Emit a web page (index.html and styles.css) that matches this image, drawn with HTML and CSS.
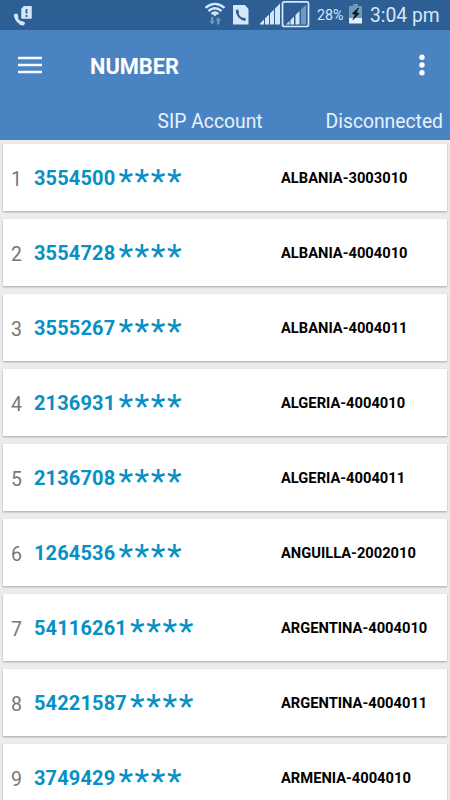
FILE: index.html
```
<!DOCTYPE html>
<html lang="en">
<head>
    <meta charset="UTF-8">
    <meta name="viewport" content="width=device-width, initial-scale=1">
    <title>Number</title>
    <link rel="stylesheet" href="styles.css">
</head>
<body>

    <div class="status-bar">
        <svg class="call-icon" width="20" height="22" viewBox="0 0 20 22">
            <path d="M11.500.5H18v11.500H9V3z" fill="#d5e8fb" stroke="#d5e8fb" stroke-linejoin="round" stroke-width="1.500"/>
            <path d="M13.500 3v4.500M13.500 9v2" stroke="#2d5f94" stroke-width="1.800"/>
            <path d="M2.500 9Q3.500 16.500 10.500 17.500" fill="none" stroke="#d5e8fb" stroke-width="3"/>
            <path d="M1.300 8.500l2.800-.5 1 3.500-2.600 1.200zM6.800 15.200l4.700 1.400-.8 2.500-4-.8z" fill="#d5e8fb" stroke="#d5e8fb" stroke-linejoin="round"/>
        </svg>
        <div class="status-right">
            <svg class="wifi-icon" width="22" height="24" viewBox="0 0 22 24">
                <g fill="none" stroke="#d5e8fb" stroke-width="2.300">
                    <path d="M1.500 5.800Q11-2 20.500 5.800"/>
                    <path d="M4.500 9Q11 3.500 17.500 9"/>
                    <path d="M7.500 12Q11 9 14.500 12"/>
                </g>
                <path d="M8.800 12h4.400L11 14.500z" fill="#d5e8fb"/>
                <path d="M7 15h2.400v4h1.600l-2.800 3.500L5.400 19H7zM13 22.500h2.400v-4H17L14.200 15l-2.800 3.500H13z" fill="#7399c3"/>
            </svg>
            <svg class="sim-icon" width="16" height="20" viewBox="0 0 16 20">
                <path d="M0 0h12l3.500 4v15.500H0z" fill="#d5e8fb"/>
                <path d="M4 5Q4 13 12 15" fill="none" stroke="#2d5f94" stroke-width="2"/>
                <path d="M2.700 5l2.400-.5 1 3-2.400 1.500zM9 12.500l3.800.8-.5 2.800-4-1.300z" fill="#2d5f94"/>
            </svg>
            <svg class="signal-icon" width="50" height="28" viewBox="0 0 50 28">
                <g fill="#d5e8fb">
                    <path d="M0 23.500l4-4v5H0zM5 18.500l4-4v10H5zM10 13.500l4-4v15h-4zM15 8.500l5-5v21h-5z"/>
                    <path d="M26 24.500l3.500-3.500v3.500zM30.500 20l3.500-3.500v8h-3.500zM35.500 15l4-4v13.500h-4z"/>
                </g>
                <path d="M41 9.500L46 5v19.500h-5z" fill="#7399c3"/>
                <rect x="22.500" y="1.800" width="26" height="24.700" rx="2" fill="none" stroke="#d5e8fb" stroke-width="1.700"/>
            </svg>
            <span class="battery-level">28%</span>
            <svg class="battery-icon" width="13" height="20" viewBox="0 0 13 20">
                <path d="M4 0h5v2h4v12H0V2h4z" fill="#7399b8"/>
                <path d="M0 14h13v5.500H0z" fill="#e3f1fd"/>
                <path d="M9.500 4L3.500 9.500l3 1L4 15.500l6-6-3-1z" fill="#111b27" stroke="#111b27"/>
            </svg>
            <span class="clock">3:04 pm</span>
        </div>
    </div>

    <div class="header">
        <div class="toolbar">
            <svg class="menu-icon" width="24" height="18" viewBox="0 0 24 18">
                <path d="M0 2h24M0 9h24M0 16h24" stroke="#f4faff" stroke-width="2.300"/>
            </svg>
            <h1 class="title">NUMBER</h1>
            <svg class="more-icon" width="6" height="22" viewBox="0 0 6 22">
                <g fill="#fff">
                    <circle cx="3" cy="3.300" r="2.700"/>
                    <circle cx="3" cy="11" r="2.700"/>
                    <circle cx="3" cy="18.700" r="2.700"/>
                </g>
            </svg>
        </div>
        <div class="account">
            <span class="account-name">SIP Account</span>
            <span class="account-state">Disconnected</span>
        </div>
    </div>

    <div class="list">
        <div class="card">
            <span class="index">1</span>
            <span class="number">3554500<span class="mask">****</span></span>
            <span class="code">ALBANIA-3003010</span>
        </div>
        <div class="card">
            <span class="index">2</span>
            <span class="number">3554728<span class="mask">****</span></span>
            <span class="code">ALBANIA-4004010</span>
        </div>
        <div class="card">
            <span class="index">3</span>
            <span class="number">3555267<span class="mask">****</span></span>
            <span class="code">ALBANIA-4004011</span>
        </div>
        <div class="card">
            <span class="index">4</span>
            <span class="number">2136931<span class="mask">****</span></span>
            <span class="code">ALGERIA-4004010</span>
        </div>
        <div class="card">
            <span class="index">5</span>
            <span class="number">2136708<span class="mask">****</span></span>
            <span class="code">ALGERIA-4004011</span>
        </div>
        <div class="card">
            <span class="index">6</span>
            <span class="number">1264536<span class="mask">****</span></span>
            <span class="code">ANGUILLA-2002010</span>
        </div>
        <div class="card">
            <span class="index">7</span>
            <span class="number">54116261<span class="mask">****</span></span>
            <span class="code">ARGENTINA-4004010</span>
        </div>
        <div class="card">
            <span class="index">8</span>
            <span class="number">54221587<span class="mask">****</span></span>
            <span class="code">ARGENTINA-4004011</span>
        </div>
        <div class="card">
            <span class="index">9</span>
            <span class="number">3749429<span class="mask">****</span></span>
            <span class="code">ARMENIA-4004010</span>
        </div>
    </div>

</body>
</html>
```
FILE: styles.css
```
* {
    margin: 0;
    padding: 0;
    box-sizing: border-box;
}
body {
    display: flex;
    flex-direction: column;
    height: 100vh;
    overflow: hidden;
    background-color: #ececec;
    font-family: Roboto, sans-serif;
}
svg {
    display: block;
    flex-shrink: 0;
}
.status-bar {
    display: flex;
    justify-content: space-between;
    flex-shrink: 0;
    height: 30px;
    padding: 0 10px 0 13px;
    background-color: #2d5f94;
    color: #d5e8fb;
}
.call-icon {
    margin-top: 6px;
}
.status-right {
    display: flex;
    line-height: 31px;
    white-space: nowrap;
}
.wifi-icon {
    margin: 2px 7px 0 0;
}
.sim-icon {
    margin: 5px 11px 0 0;
}
.signal-icon {
    margin-right: 7px;
}
.battery-level {
    width: 32px;
    font-size: 14.3px;
}
.battery-icon {
    margin: 4px 8px 0 0;
}
.clock {
    width: 70px;
    font-size: 19.3px;
}
.header {
    flex-shrink: 0;
    height: 110px;
    background-color: #4a83c2;
    color: #fff;
}
.toolbar {
    display: flex;
    align-items: center;
    height: 70px;
    padding: 0 25px 0 18px;
}
.title {
    flex-grow: 1;
    margin: 2px 0 0 48px;
    font-size: 21.8px;
    font-weight: 700;
}
.account {
    display: flex;
    justify-content: flex-end;
    gap: 63px;
    padding-right: 7px;
    font-size: 19.3px;
    line-height: 44px;
    color: #e6f2ff;
}
.list {
    display: flex;
    flex-direction: column;
    gap: 8px;
    padding: 4px 3px 0;
}
.card {
    display: flex;
    align-items: center;
    flex-shrink: 0;
    height: 67px;
    padding-left: 8px;
    background-color: #fff;
    box-shadow: 0 1px 2px rgba(0, 0, 0, 0.3);
}
.index {
    width: 23px;
    padding-top: 3px;
    font-size: 19.5px;
    color: #777;
}
.number {
    width: 247px;
    font-size: 20px;
    font-weight: 700;
    line-height: 24px;
    letter-spacing: 0.15px;
    color: #0790c4;
}
.mask {
    margin-left: 3px;
    font-size: 34px;
    font-weight: 400;
    line-height: 0;
    letter-spacing: 1.6px;
    vertical-align: -8px;
}
.code {
    font-size: 14.7px;
    font-weight: 700;
    color: #000;
}
```
